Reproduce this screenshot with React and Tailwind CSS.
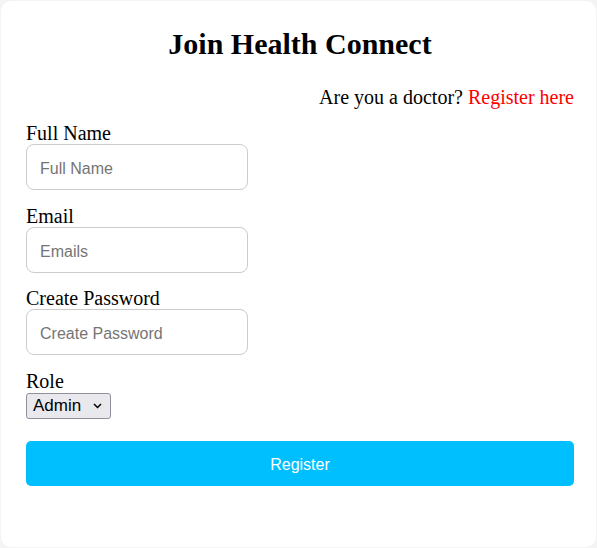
import { useState } from 'react';

const fields = [
  { id: 'name', label: 'Full Name', placeholder: 'Full Name', type: 'text' },
  { id: 'email', label: 'Email', placeholder: 'Emails', type: 'email' },
  { id: 'password', label: 'Create Password', placeholder: 'Create Password', type: 'password' },
];

const App = () => {
  const [role, setRole] = useState('Admin');

  return (
    <div className="min-h-[548px] w-[597px] bg-[#f4f4f4] pt-px pl-px">
      <div className="w-[595px] h-[546px] bg-white rounded-[10px] pt-[26px] pl-[25px] pr-[22px] text-black [font-family:'Liberation_Serif',serif]">
        <h1 className="text-[30px] font-bold text-center leading-[33px]">Join Health Connect</h1>

        <p className="mt-[26px] text-[20px] leading-[22px] text-right">
          Are you a doctor? <a href="#" className="text-[#ff0000]">Register here</a>
        </p>

        <form className="mt-[14px]" onSubmit={(e) => e.preventDefault()}>
          {fields.map((f) => (
            <div key={f.id} className="mb-[14.5px]">
              <label htmlFor={f.id} className="block text-[20px] leading-[22px]">{f.label}</label>
              <input
                id={f.id}
                type={f.type}
                placeholder={f.placeholder}
                className="block w-[222px] h-[46px] px-[13px] pt-[4px] border border-[#cccccc] rounded-[8px] text-[16px] font-['Liberation_Sans',Arial,sans-serif] placeholder:text-[#757575] focus:outline-none"
              />
            </div>
          ))}

          <label htmlFor="role" className="block text-[20px] leading-[22px]">Role</label>
          <div className="relative mt-[1px] w-[85px] h-[26px]">
            <select
              id="role"
              value={role}
              onChange={(e) => setRole(e.target.value)}
              className="appearance-none w-full h-full pl-[6px] pr-[20px] bg-[#e9e9ed] border border-[#8f8f9d] rounded-[3px] text-[17px] leading-[24px] text-black font-['Liberation_Sans',Arial,sans-serif]"
            >
              <option>Admin</option>
              <option>Patient</option>
            </select>
            <svg className="absolute right-[9px] top-[10px] w-[9px] h-[6px] pointer-events-none" viewBox="0 0 9 6" fill="none">
              <path d="M1 1 L4.5 4.5 L8 1" stroke="#000" strokeWidth="1.5" />
            </svg>
          </div>

          <button
            type="submit"
            className="mt-[22px] w-[548px] h-[45px] pt-[3px] bg-[#00bfff] rounded-[5px] text-white text-[16px] font-['Liberation_Sans',Arial,sans-serif]"
          >
            Register
          </button>
        </form>
      </div>
    </div>
  );
};

export default App;
